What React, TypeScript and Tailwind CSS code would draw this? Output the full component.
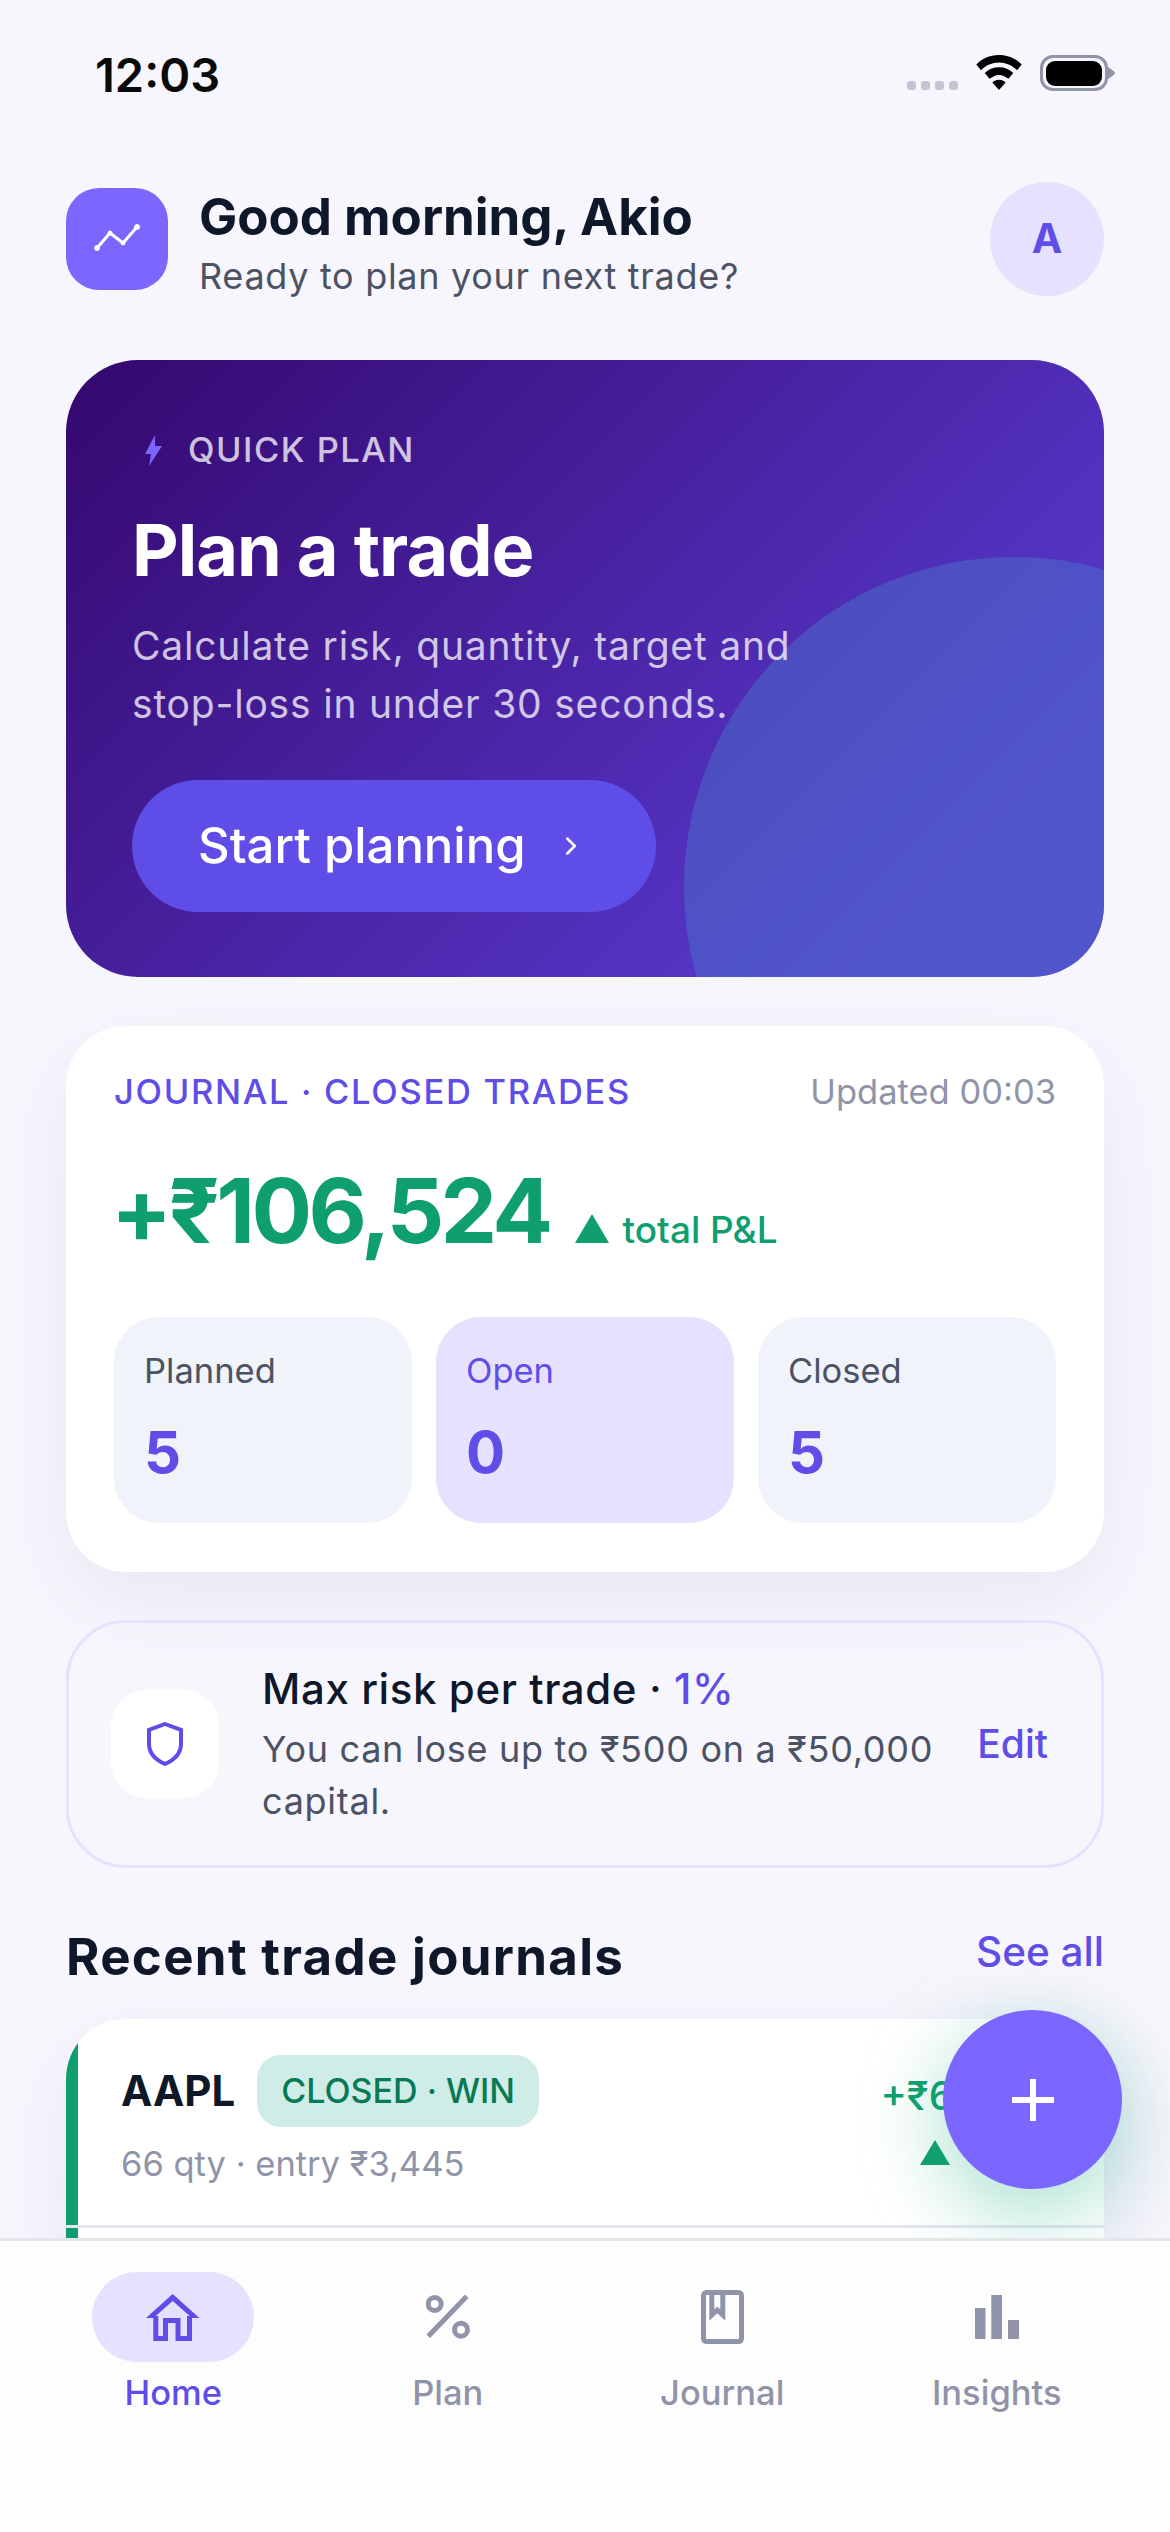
import { ChevronRight } from "lucide-react";

function HomeIcon() {
  return (
    <svg width="54" height="47" viewBox="0 0 54 47" fill="none" stroke="#5f4de8" strokeWidth="5">
      <polygon points="26.7,0 53.4,24 46,24 26.7,7 7.4,24 0,24" fill="#5f4de8" stroke="none" />
      <path d="M9.8 22V44.5H19.5V26.5H32V44.5H43.5V22" />
    </svg>
  );
}

function PercentIcon() {
  return (
    <svg width="44" height="44" viewBox="0 0 44 44" fill="none" stroke="#8f94a8" strokeWidth="5">
      <circle cx="8.7" cy="9" r="6.5" />
      <circle cx="35" cy="34.7" r="6.5" />
      <path d="M40.7 1.3 2.3 41.3" />
    </svg>
  );
}

function BookIcon() {
  return (
    <svg width="43" height="54" viewBox="0 0 43 54" fill="none" stroke="#8f94a8" strokeWidth="5">
      <rect x="2.5" y="2.5" width="38" height="49" rx="3" />
      <path d="M10.8 3V25l5.5-5 5.5 5V3" />
    </svg>
  );
}

function BarsIcon() {
  return (
    <svg width="44" height="44" viewBox="0 0 44 44" fill="#8f94a8">
      <rect x="0" y="13" width="10.5" height="31" />
      <rect x="16.3" y="0" width="10.7" height="44" />
      <rect x="33" y="25" width="11" height="19" />
    </svg>
  );
}

function Stat({ label, value, active }: { label: string; value: string; active?: boolean }) {
  return (
    <div className={`flex h-[206px] flex-col rounded-[45px] pl-[30px] pt-[33px] ${active ? "bg-[#e6e1ff]" : "bg-[#f0f3f9]"}`}>
      <span className={`text-[34.5px] leading-[42px] ${active ? "text-[#5f4de8]" : "text-[#4b5264]"}`}>{label}</span>
      <span className="mt-[24px] text-[58px] leading-[72px] font-bold text-[#5f4de8]">{value}</span>
    </div>
  );
}

function Tab({ label, icon, active }: { label: string; icon: React.ReactNode; active?: boolean }) {
  return (
    <div className="flex flex-col items-center">
      <div className={`flex h-[90px] w-[162px] items-center justify-center rounded-[45px] ${active ? "bg-[#e6e1ff]" : ""}`}>{icon}</div>
      <span className={`mt-[9px] text-[34.5px] leading-[44px] font-medium ${active ? "text-[#5f4de8]" : "text-[#8f94a8]"}`}>{label}</span>
    </div>
  );
}

export default function App() {
  return (
    <div className="relative h-[2532px] w-[1170px] overflow-hidden bg-[#f8f6fd] font-['Inter',sans-serif]">
      {/* status bar */}
      <div className="flex h-[150px] items-start justify-between pl-[95px] pr-[55px] pt-[49px]">
        <span className="text-[47px] leading-[52px] font-semibold text-[#0a0a0a]">12:03</span>
        <div className="flex items-center gap-[17px] pt-[6px]">
          <div className="mt-[24px] flex gap-[5px]">
            <span className="h-[9px] w-[9px] rounded-[3px] bg-[#c6c3d6]" />
            <span className="h-[9px] w-[9px] rounded-[3px] bg-[#c6c3d6]" />
            <span className="h-[9px] w-[9px] rounded-[3px] bg-[#c6c3d6]" />
            <span className="h-[9px] w-[9px] rounded-[3px] bg-[#c6c3d6]" />
          </div>
          <svg width="48" height="36" viewBox="0 0 50 38" fill="#000">
            <path d="M25 0C15 0 7 4 1 10l5 6c5-5 12-8 19-8s14 3 19 8l5-6C43 4 35 0 25 0Z" />
            <path d="M25 13c-6 0-11 2-15 6l5 6c3-2 6-4 10-4s7 2 10 4l5-6c-4-4-9-6-15-6Z" />
            <path d="M25 26c-3 0-5 1-7 3l7 8 7-8c-2-2-4-3-7-3Z" />
          </svg>
          <div className="flex items-center">
            <div className="flex h-[36px] w-[68px] items-center justify-center rounded-[13px] border-[3.5px] border-[#8f94a8]">
              <div className="h-[25px] w-[56px] rounded-[9px] bg-black" />
            </div>
            <svg width="7" height="12" viewBox="0 0 7 12" fill="#8f94a8">
              <path d="M0 0 5 3.5Q7 5 7 6T5 8.5L0 12Z" />
            </svg>
          </div>
        </div>
      </div>

      <main className="px-[66px]">
        {/* header */}
        <div className="mt-[32px] flex h-[114px] items-center justify-between">
          <div className="flex items-center gap-[31px]">
            <div className="flex h-[102px] w-[102px] items-center justify-center rounded-[33px] bg-[#7b66ff]">
              <svg width="48" height="30" viewBox="0 0 48 30" fill="#fff" stroke="#fff" strokeLinejoin="round">
                <path d="M4 24 17 9 30 19 44 3" fill="none" strokeWidth="3" />
                <circle cx="4" cy="24" r="2.5" strokeWidth="1" />
                <circle cx="17" cy="9" r="2" strokeWidth="1" />
                <circle cx="30" cy="19" r="2" strokeWidth="1" />
                <circle cx="44" cy="3" r="2.5" strokeWidth="1" />
              </svg>
            </div>
            <div className="flex flex-col pt-[9px]">
              <span className="text-[51px] leading-[60px] font-bold text-[#0f172a]">Good morning, Akio</span>
              <span className="mt-[5px] text-[36px] leading-[48px] tracking-[0.7px] text-[#4b5264]">Ready to plan your next trade?</span>
            </div>
          </div>
          <div className="flex h-[114px] w-[114px] items-center justify-center rounded-full bg-[#e6e1ff] text-[41px] font-bold text-[#5f4de8]">A</div>
        </div>

        {/* hero */}
        <section className="relative mt-[64px] h-[617px] overflow-hidden rounded-[72px] bg-[linear-gradient(135deg,#34086e_0%,#5a3ad0_85%)] px-[66px] pt-[68px]">
          <div className="absolute left-[618px] top-[197px] h-[660px] w-[660px] rounded-full bg-[#4a6bc8]/55" />
          <div className="relative">
            <div className="flex items-center gap-[26px] pl-[13px]">
              <svg width="17" height="31" viewBox="0 0 17 31" fill="#7b66ff">
                <path d="M10 0 0 19h6L4 31 17 11h-7Z" />
              </svg>
              <span className="text-[34.5px] leading-[44px] font-medium tracking-[1.5px] text-white/75">QUICK PLAN</span>
            </div>
            <h1 className="mt-[36px] text-[72px] leading-[84px] font-bold tracking-[-1px] text-white">Plan a trade</h1>
            <p className="mt-[25px] w-[700px] text-[39px] leading-[58px] tracking-[0.8px] text-white/75">Calculate risk, quantity, target and stop-loss in under 30 seconds.</p>
            <div className="mt-[47px] flex h-[132px] w-[524px] items-center gap-[30px] rounded-full bg-[#5f4de8] pl-[66px]">
              <span className="text-[49px] font-medium text-white">Start planning</span>
              <ChevronRight size={30} className="text-white" />
            </div>
          </div>
        </section>

        {/* pnl */}
        <section className="mt-[49px] h-[546px] rounded-[60px] bg-white px-[48px] pt-[45px] shadow-[0_30px_90px_rgba(60,50,120,0.08)]">
          <div className="flex items-center justify-between">
            <span className="text-[34.5px] leading-[42px] font-medium tracking-[1.7px] text-[#5f4de8]">JOURNAL · CLOSED TRADES</span>
            <span className="text-[34.5px] leading-[42px] text-[#8f94a8]">Updated 00:03</span>
          </div>
          <div className="mt-[43px] flex items-baseline gap-[25px]">
            <span className="-ml-[3px] text-[90px] leading-[110px] font-bold tracking-[-3.6px] text-[#0f9f6e]">+₹106,524</span>
            <div className="flex items-baseline gap-[14px]">
              <span className="inline-block h-0 w-0 border-x-[17px] border-b-[29px] border-x-transparent border-b-[#0f9f6e]" />
              <span className="text-[37px] font-medium text-[#0f9f6e]">total P&amp;L</span>
            </div>
          </div>
          <div className="mt-[51px] grid grid-cols-3 gap-[24px]">
            <Stat label="Planned" value="5" />
            <Stat label="Open" value="0" active />
            <Stat label="Closed" value="5" />
          </div>
        </section>

        {/* risk */}
        <section className="mt-[48px] flex h-[248px] items-center rounded-[60px] border-[3px] border-[#e6e1ff] pl-[42px] pr-[53px]">
          <div className="flex h-[108px] w-[108px] shrink-0 items-center justify-center rounded-[36px] bg-white">
            <svg width="36" height="44" viewBox="0 0 36 44" fill="none" stroke="#5f4de8" strokeWidth="4">
              <path d="M18 2 34 8V22C34 32 27 38 18 42 9 38 2 32 2 22V8Z" />
            </svg>
          </div>
          <div className="ml-[43px] flex-1">
            <div className="text-[42px] leading-[54px] font-medium tracking-[0.6px] text-[#0f172a]">Max risk per trade · <span className="text-[#5f4de8]">1%</span></div>
            <div className="mt-[7px] w-[700px] text-[36px] leading-[52px] tracking-[0.72px] text-[#4b5264]">You can lose up to ₹500 on a ₹50,000 capital.</div>
          </div>
          <span className="text-[39px] font-medium text-[#5f4de8]">Edit</span>
        </section>

        {/* recent */}
        <div className="mt-[54px] flex items-center justify-between">
          <span className="text-[51px] leading-[66px] font-bold tracking-[1.3px] text-[#0f172a]">Recent trade journals</span>
          <span className="pb-[10px] text-[40.5px] font-medium text-[#5f4de8]">See all</span>
        </div>
        <section className="mt-[26px] overflow-hidden rounded-t-[60px] bg-white shadow-[0_30px_90px_rgba(60,50,120,0.08)]">
          <div className="flex h-[206px]">
            <div className="w-[12px] bg-[#0f9f6e]" />
            <div className="flex flex-1 justify-between pl-[43px] pr-[48px] pt-[36px]">
              <div>
                <div className="flex items-center gap-[22px]">
                  <span className="text-[42px] font-bold text-[#0f172a]">AAPL</span>
                  <span className="rounded-[24px] bg-[#d0ece6] px-[24px] py-[14px] text-[34px] leading-[44px] font-medium text-[#067a55]">CLOSED · WIN</span>
                </div>
                <div className="mt-[16px] text-[34.5px] leading-[42px] text-[#8f94a8]">66 qty · entry ₹3,445</div>
              </div>
              <div className="flex flex-col items-end">
                <span className="mt-[12px] text-[39.5px] font-medium text-[#0f9f6e]">+₹61,380</span>
                <span className="mr-[106px] mt-[14px] inline-block h-0 w-0 border-x-[15px] border-b-[25px] border-x-transparent border-b-[#0f9f6e]" />
              </div>
            </div>
          </div>
          <div className="h-[3px] bg-[#e5e7ee]" />
          <div className="flex h-[40px]">
            <div className="w-[12px] bg-[#0f9f6e]" />
          </div>
        </section>
      </main>

      {/* fab */}
      <div className="absolute left-[943px] top-[2010px] flex h-[179px] w-[179px] items-center justify-center rounded-full bg-[#7b66ff] shadow-[0_24px_84px_rgba(16,170,130,0.38)]">
        <svg width="42" height="42" viewBox="0 0 42 42" stroke="#fff" strokeWidth="6">
          <path d="M21 0V42M0 21H42" />
        </svg>
      </div>

      {/* bottom nav */}
      <nav className="absolute inset-x-0 bottom-0 grid h-[294px] grid-cols-4 border-t-[3px] border-[#e3e5ec] bg-[#fdfdfe] px-[36px] pt-[31px]">
        <Tab label="Home" icon={<HomeIcon />} active />
        <Tab label="Plan" icon={<PercentIcon />} />
        <Tab label="Journal" icon={<BookIcon />} />
        <Tab label="Insights" icon={<BarsIcon />} />
      </nav>
    </div>
  );
}
